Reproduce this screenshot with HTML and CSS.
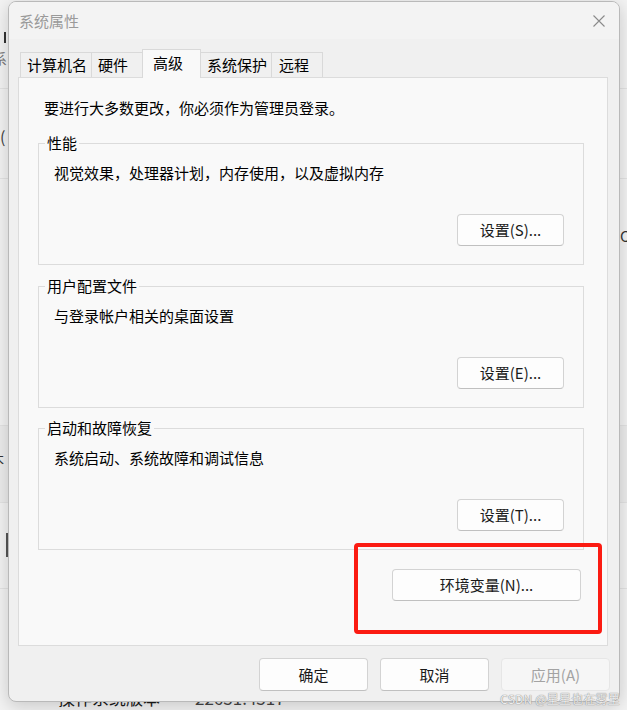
FILE: index.html
```html
<!DOCTYPE html>
<html lang="zh-CN">
<head>
<meta charset="utf-8">
<title>系统属性</title>
<link rel="stylesheet" href="styles.css">
</head>
<body>
<div class="bg">
  <div class="bg-row bg-row-a"><span class="bg-bar"></span><span class="bg-glyph bg-glyph-sys">系</span></div>
  <div class="bg-row bg-row-b"><span class="bg-paren">(</span></div>
  <div class="bg-row bg-row-c"><span class="bg-c">C</span></div>
  <div class="bg-row bg-row-d"><span class="bg-glyph bg-glyph-mu">木</span></div>
  <div class="bg-row bg-row-e"><span class="bg-bar bg-bar-long"></span></div>
  <div class="bg-row bg-row-f"><span class="bg-label">操作系统版本</span><span class="bg-value">22631.4317</span></div>
</div>

<div class="dialog">
  <div class="titlebar">
    <span class="title">系统属性</span>
    <svg class="close" width="12" height="12" viewBox="0 0 12 12"><path d="M0.5 0.5 L11.5 11.5 M11.5 0.5 L0.5 11.5" stroke="#8a8a8a" stroke-width="1.1" fill="none"/></svg>
  </div>
  <div class="client">
    <div class="tabs">
      <div class="tab tab-1">计算机名</div>
      <div class="tab tab-2">硬件</div>
      <div class="tab tab-3 selected">高级</div>
      <div class="tab tab-4">系统保护</div>
      <div class="tab tab-5">远程</div>
    </div>
    <div class="panel">
      <p class="intro">要进行大多数更改，你必须作为管理员登录。</p>

      <fieldset class="group group-1">
        <legend>性能</legend>
        <p class="desc">视觉效果，处理器计划，内存使用，以及虚拟内存</p>
        <div class="group-actions"><button class="btn btn-set">设置(S)...</button></div>
      </fieldset>

      <fieldset class="group group-2">
        <legend>用户配置文件</legend>
        <p class="desc">与登录帐户相关的桌面设置</p>
        <div class="group-actions"><button class="btn btn-set">设置(E)...</button></div>
      </fieldset>

      <fieldset class="group group-3">
        <legend>启动和故障恢复</legend>
        <p class="desc">系统启动、系统故障和调试信息</p>
        <div class="group-actions"><button class="btn btn-set">设置(T)...</button></div>
      </fieldset>

      <div class="env-row"><button class="btn btn-env">环境变量(N)...</button></div>
      <div class="highlight"></div>
    </div>
    <div class="footer">
      <button class="btn btn-foot">确定</button>
      <button class="btn btn-foot">取消</button>
      <button class="btn btn-foot disabled">应用(A)</button>
    </div>
  </div>
</div>

<div class="watermark">CSDN @星星也在雾里</div>
</body>
</html>
```

FILE: styles.css
```css
html, body {
  margin: 0;
  padding: 0;
}
body {
  width: 627px;
  height: 710px;
  overflow: hidden;
  position: relative;
  background: #f3f3f3;
  font-family: "Noto Sans CJK SC", "Noto Sans", sans-serif;
  color: #000;
}

/* ---------- background page ---------- */
.bg {
  display: flex;
  flex-direction: column;
}
.bg-row {
  position: relative;
  border-bottom: 1px solid #e3e3e3;
  box-sizing: border-box;
}
.bg-row-a { height: 89px; }
.bg-row-b { height: 90px; }
.bg-row-c { height: 247px; }
.bg-row-d { height: 77px; background: #ececec; }
.bg-row-e { height: 86px; }
.bg-row-f { height: 121px; border-bottom: none; }

.bg-bar {
  position: absolute;
  left: 4px;
  top: 32px;
  width: 2px;
  height: 11px;
  background: #333;
}
.bg-bar-long {
  left: 6px;
  top: 30px;
  height: 24px;
  background: #555;
}
.bg-glyph {
  position: absolute;
  font-size: 14px;
  line-height: 16px;
  color: #777;
}
.bg-glyph-sys { left: -7px; top: 50px; }
.bg-glyph-mu { left: -10px; top: 24px; color: #333; }
.bg-paren {
  position: absolute;
  left: 0;
  top: 37px;
  font-size: 16px;
  line-height: 20px;
  color: #444;
}
.bg-c {
  position: absolute;
  left: 620px;
  top: 47px;
  font-size: 15px;
  line-height: 20px;
  color: #333;
}
.bg-label, .bg-value {
  position: absolute;
  top: 98px;
  font-size: 17px;
  line-height: 22px;
  color: #1a1a1a;
}
.bg-label { left: 58px; }
.bg-value { left: 195px; color: #444; }

/* ---------- dialog window ---------- */
.dialog {
  position: absolute;
  left: 8px;
  top: 1px;
  width: 612px;
  height: 701px;
  box-sizing: border-box;
  border: 1px solid #b9b9b9;
  border-radius: 8px;
  background: #f0f0f0;
  box-shadow: 0 4px 18px rgba(0, 0, 0, 0.18);
  display: flex;
  flex-direction: column;
  overflow: hidden;
}
.titlebar {
  height: 37px;
  flex: none;
  background: #f3f3f3;
  display: flex;
  align-items: center;
  justify-content: space-between;
  padding: 0 14px 0 10px;
}
.title {
  font-size: 15px;
  line-height: 20px;
  color: #9a9a9a;
}
.close {
  display: block;
  margin-top: 1px;
}

.client {
  flex: 1;
  display: flex;
  flex-direction: column;
  padding: 10px 9px 10px 9px;
  min-height: 0;
}

/* ---------- tabs ---------- */
.tabs {
  display: flex;
  align-items: flex-end;
  height: 28px;
  padding-left: 2px;
  position: relative;
  z-index: 2;
}
.tab {
  box-sizing: border-box;
  height: 25px;
  border-top: 1px solid #d9d9d9;
  border-left: 1px solid #d9d9d9;
  background: #f0f0f0;
  font-size: 15px;
  line-height: 23px;
  padding-left: 6px;
  white-space: nowrap;
}
.tab-1 { width: 71px; }
.tab-2 { width: 53px; }
.tab-3 { width: 57px; padding-left: 8px; }
.tab-4 { width: 70px; border-left: none; }
.tab-5 { width: 52px; border-right: 1px solid #d9d9d9; padding-left: 7px; }
.tab.selected {
  height: 29px;
  margin-bottom: -1px;
  border-right: 1px solid #d9d9d9;
  background: #f9f9f9;
  line-height: 26px;
  margin-left: -2px;
  width: 59px;
  padding-left: 10px;
}

/* ---------- panel ---------- */
.panel {
  position: relative;
  flex: 1;
  margin-right: 2px;
  border: 1px solid #dcdcdc;
  background: #f9f9f9;
  display: flex;
  flex-direction: column;
}
.intro {
  margin: 20px 0 0 25px;
  font-size: 15px;
  line-height: 20px;
}

.group {
  margin: 11px 23px 0 19px;
  padding: 0;
  border: 1px solid #dcdcdc;
  min-width: 0;
}
.group-1 { margin-top: 15px; }
.group-3 { margin-top: 10px; }
.group legend {
  margin-left: 6px;
  padding: 0 2px;
  font-size: 15px;
  line-height: 20px;
}
.desc {
  margin: 10px 0 0 15px;
  font-size: 15px;
  line-height: 20px;
}
.group-actions {
  display: flex;
  justify-content: flex-end;
  margin: 31px 19px 18px 0;
}

.btn {
  font-family: "Noto Sans CJK SC", "Noto Sans", sans-serif;
  font-size: 15px;
  line-height: 20px;
  color: #1a1a1a;
  background: #fdfdfd;
  border: 1px solid #d3d3d3;
  border-bottom-color: #c0c0c0;
  border-radius: 4px;
  padding: 0;
  box-sizing: border-box;
  display: flex;
  align-items: center;
  justify-content: center;
}
.btn-set {
  width: 107px;
  height: 32px;
}
.env-row {
  display: flex;
  justify-content: flex-end;
  margin: 19px 26px 0 0;
}
.btn-env {
  width: 189px;
  height: 32px;
}

.highlight {
  position: absolute;
  left: 335px;
  top: 465px;
  width: 248px;
  height: 91px;
  box-sizing: border-box;
  border: 4px solid #fb1b12;
  border-radius: 4px;
}

/* ---------- footer ---------- */
.footer {
  flex: none;
  display: flex;
  justify-content: flex-end;
  gap: 12px;
  margin-top: 12px;
}
.btn-foot {
  width: 109px;
  height: 33px;
}
.btn-foot.disabled {
  color: #a3a3a3;
  background: #f6f6f6;
  border-color: #e6e6e6;
}

/* ---------- watermark ---------- */
.watermark {
  position: absolute;
  right: 7px;
  bottom: 3px;
  font-size: 12px;
  line-height: 16px;
  color: rgba(255, 255, 255, 0.85);
  text-shadow: 0 0 1px #8a8a8a, 0 0 1px #8a8a8a;
  letter-spacing: 0.2px;
}
```
